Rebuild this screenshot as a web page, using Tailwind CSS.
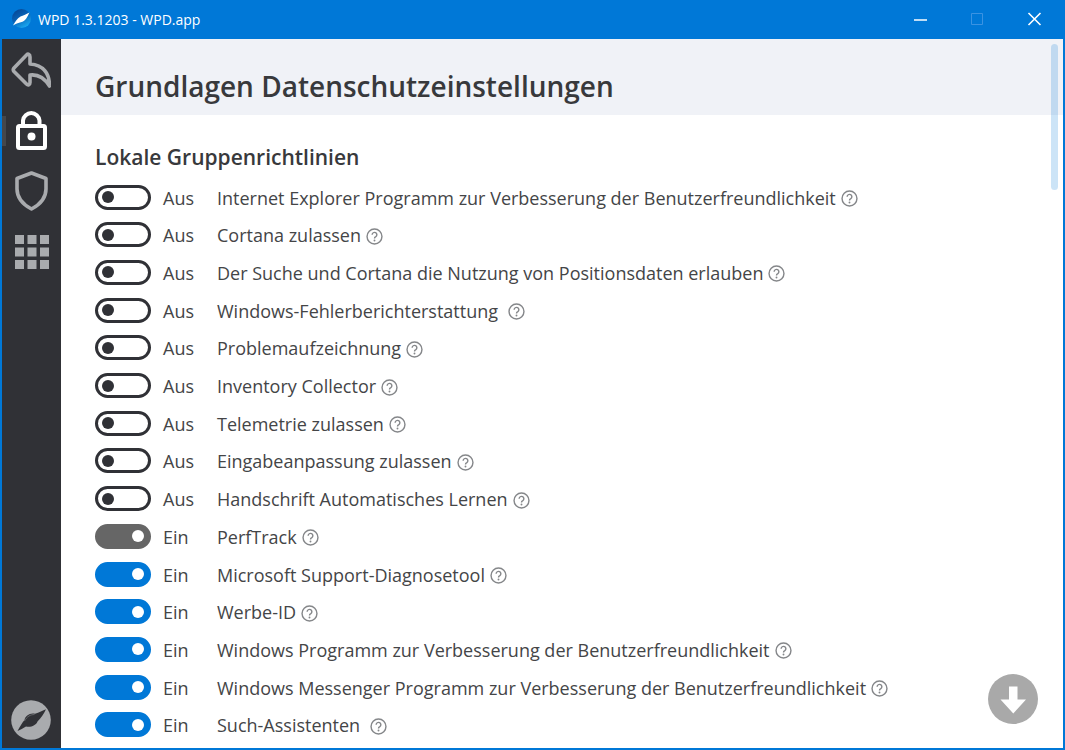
<!DOCTYPE html>
<html lang="de">
<head>
<meta charset="utf-8">
<title>WPD 1.3.1203 - WPD.app</title>
<script src="https://cdn.jsdelivr.net/npm/@tailwindcss/browser@4"></script>
</head>
<body class="h-screen overflow-hidden font-['Open_Sans',sans-serif] text-[#38393c]">
<div class="relative flex h-full flex-col border-x-2 border-b-2 border-[#0078d7] bg-white">
  <header class="flex h-[39px] shrink-0 items-center bg-[#0078d7] pl-2 text-white">
    <svg class="size-6" viewBox="0 0 24 24"><defs><linearGradient id="g" x1="0" y1="0" x2="0.6" y2="1"><stop offset="0" stop-color="#053f8c"/><stop offset="0.5" stop-color="#0860b4"/><stop offset="1" stop-color="#19a5ee"/></linearGradient></defs><circle cx="11.500" cy="10.500" r="9.500" fill="url(#g)"/><path d="M3 17.500C5 14 7 10.500 10.500 8.500C13 8 17 5.500 19.500 4.500C17.500 8 16.500 12 12.500 13.800C9 15 6 15.500 3 17.500Z" fill="#fff"/></svg>
    <span class="ml-1 text-[14px]">WPD 1.3.1203 - WPD.app</span>
    <div class="ml-auto flex h-full">
      <button class="grid w-[57px] place-items-center" aria-label="Minimieren"><svg class="size-4" viewBox="0 0 16 16" stroke="#fff" stroke-width="1.500"><path d="M1 8H14"/></svg></button>
      <button class="grid w-[57px] place-items-center" aria-label="Maximieren" disabled><svg class="size-4" viewBox="0 0 16 16" fill="none" stroke="#3b93e2"><path d="M1.500 1.500H12.500V12.500H1.500Z"/></svg></button>
      <button class="grid w-[57px] place-items-center" aria-label="Schließen"><svg class="size-4" viewBox="0 0 16 16" stroke="#fff" stroke-width="1.600"><path d="M1.500 1L13.500 13M13.500 1L1.500 13"/></svg></button>
    </div>
  </header>
  <div class="flex min-h-0 flex-1">
    <nav class="flex w-[59px] shrink-0 flex-col items-center bg-[#303136] pt-3 pr-px pb-2 text-[#a9abae]">
      <button class="mb-5 h-10" aria-label="Zurück"><svg class="size-10" viewBox="0 0 40 40" fill="none" stroke="currentColor" stroke-width="3.600" stroke-linejoin="round"><path d="M19 13V6C19 3 17 2.500 15.500 4L3 17C2 18.200 2 19.300 3 20.500L15.500 33C17 34.500 19 34 19 31.500V24C27.500 23 33.500 27 38.500 35C38.500 22.500 32.500 14 19 13Z"/></svg></button>
      <button class="mb-5 h-10 text-white" aria-label="Datenschutz" aria-current="page"><svg class="size-10" viewBox="0 0 40 40" fill="none" stroke="currentColor" stroke-width="4"><rect x="7" y="15" width="27" height="22" rx="1.500"/><path d="M12 14.500V9.500a8.300 8.300 0 0 1 16.500 0V14.500"/><circle cx="20.500" cy="25.500" r="4" fill="currentColor" stroke="none"/></svg></button>
      <button class="mb-5 h-10" aria-label="Firewall"><svg class="size-10" viewBox="0 0 40 40" fill="none" stroke="currentColor" stroke-width="3.600" stroke-linejoin="round"><path d="M20.500 2L35 7.500V18C35 28 29 33.500 20.500 38C12 33.500 6 28 6 18V7.500Z"/></svg></button>
      <button class="h-10" aria-label="Apps"><svg class="size-10" viewBox="0 0 40 40" fill="currentColor"><path d="M4 4h9v9h-9zM16.500 4h9v9h-9zM29 4h9v9h-9zM4 16.500h9v9h-9zM16.500 16.500h9v9h-9zM29 16.500h9v9h-9zM4 29h9v9h-9zM16.500 29h9v9h-9zM29 29h9v9h-9z"/></svg></button>
      <button class="mt-auto h-10" aria-label="Über WPD"><svg class="size-10" viewBox="0 0 40 40"><circle cx="20" cy="20" r="19.800" fill="currentColor"/><path d="M6.500 31C9 26.500 11 23 13.500 20C14 16 19 12.500 24 13.800C28 12.500 32 10.500 35 9.300C33 13.500 30 18.500 26.500 21.500C25 25.500 20 27.500 15 26.500C12 28 9.500 30 6.500 31Z" fill="#303136"/><path d="M13.500 21C16 16.500 19.500 14.500 23.500 14.500" fill="none" stroke="#85878a" stroke-width="0.600"/></svg></button>
      <span class="absolute top-[116px] left-0 h-[30px] w-1 bg-[#45474b]"></span>
    </nav>
    <main class="flex min-w-0 flex-1 flex-col">
      <div class="flex h-[76px] shrink-0 items-center bg-[#f0f2f7] pt-[18px] pl-[34px]">
        <h1 class="text-[28px] leading-9 font-semibold">Grundlagen Datenschutzeinstellungen</h1>
      </div>
      <section class="flex min-h-0 flex-1 flex-col pt-7 pb-[10px] pl-[34px]">
        <h2 class="mb-[13px] text-[21px] leading-7 font-semibold">Lokale Gruppenrichtlinien</h2>
        <ul id="list" class="flex flex-1 flex-col justify-between"></ul>
      </section>
    </main>
  </div>
  <span class="absolute top-[44px] right-[5px] h-[146px] w-[7px] rounded-full bg-[#0078d7]/20"></span>
  <button class="absolute right-[25px] bottom-6 size-[50px]" aria-label="Nach unten"><svg class="size-full" viewBox="0 0 50 50"><circle cx="25" cy="25" r="25" fill="#a9a9a9"/><path d="M21 12.500h8.500v13H38L25.300 39.500L12.500 25.500H21Z" fill="#fff"/></svg></button>
</div>
<template id="row">
  <li class="flex h-[26px] items-center">
    <input type="checkbox" role="switch" class="flex h-[25px] w-14 shrink-0 appearance-none items-center rounded-full border-3 border-[#303136] pl-1 before:size-3 before:rounded-full before:bg-[#303136] checked:justify-end checked:border-[#0078d7] checked:bg-[#0078d7] checked:pr-1 checked:before:bg-white disabled:border-[#666666] disabled:bg-[#666666]">
    <span class="mt-0.5 ml-3 w-[54px] text-[18px] text-[#444547]"></span>
    <label class="mt-0.5 text-[18px] whitespace-nowrap text-[#444547]"></label>
    <button class="mt-[3px] ml-[5px] text-[#85878a]" aria-label="Hilfe"><svg class="size-[17px]" viewBox="0 0 18 18" fill="none" stroke="currentColor" stroke-width="1.500"><circle cx="9" cy="9" r="7.900"/><path d="M6.500 7.200a2.500 2.500 0 1 1 3.900 2C9.400 9.800 9 10.200 9 11.200" stroke-width="1.500"/><circle cx="9" cy="13.300" r="1" fill="currentColor" stroke="none"/></svg></button>
  </li>
</template>
<script>
const rows = [
  ['Internet Explorer Programm zur Verbesserung der Benutzerfreundlichkeit', 0],
  ['Cortana zulassen', 0],
  ['Der Suche und Cortana die Nutzung von Positionsdaten erlauben', 0],
  ['Windows-Fehlerberichterstattung\u00a0', 0],
  ['Problemaufzeichnung', 0],
  ['Inventory Collector', 0],
  ['Telemetrie zulassen', 0],
  ['Eingabeanpassung zulassen', 0],
  ['Handschrift Automatisches Lernen', 0],
  ['PerfTrack', 1, 1],
  ['Microsoft Support-Diagnosetool', 1],
  ['Werbe-ID', 1],
  ['Windows Programm zur Verbesserung der Benutzerfreundlichkeit', 1],
  ['Windows Messenger Programm zur Verbesserung der Benutzerfreundlichkeit', 1],
  ['Such-Assistenten\u00a0', 1],
];
const tpl = document.getElementById('row');
rows.forEach(([name, on, locked], i) => {
  const li = tpl.content.cloneNode(true);
  const box = li.querySelector('input');
  box.id = 'opt' + i; box.checked = !!on; box.disabled = !!locked;
  li.querySelector('span').textContent = on ? 'Ein' : 'Aus';
  const label = li.querySelector('label');
  label.htmlFor = box.id; label.textContent = name;
  document.getElementById('list').append(li);
});
</script>
</body>
</html>
